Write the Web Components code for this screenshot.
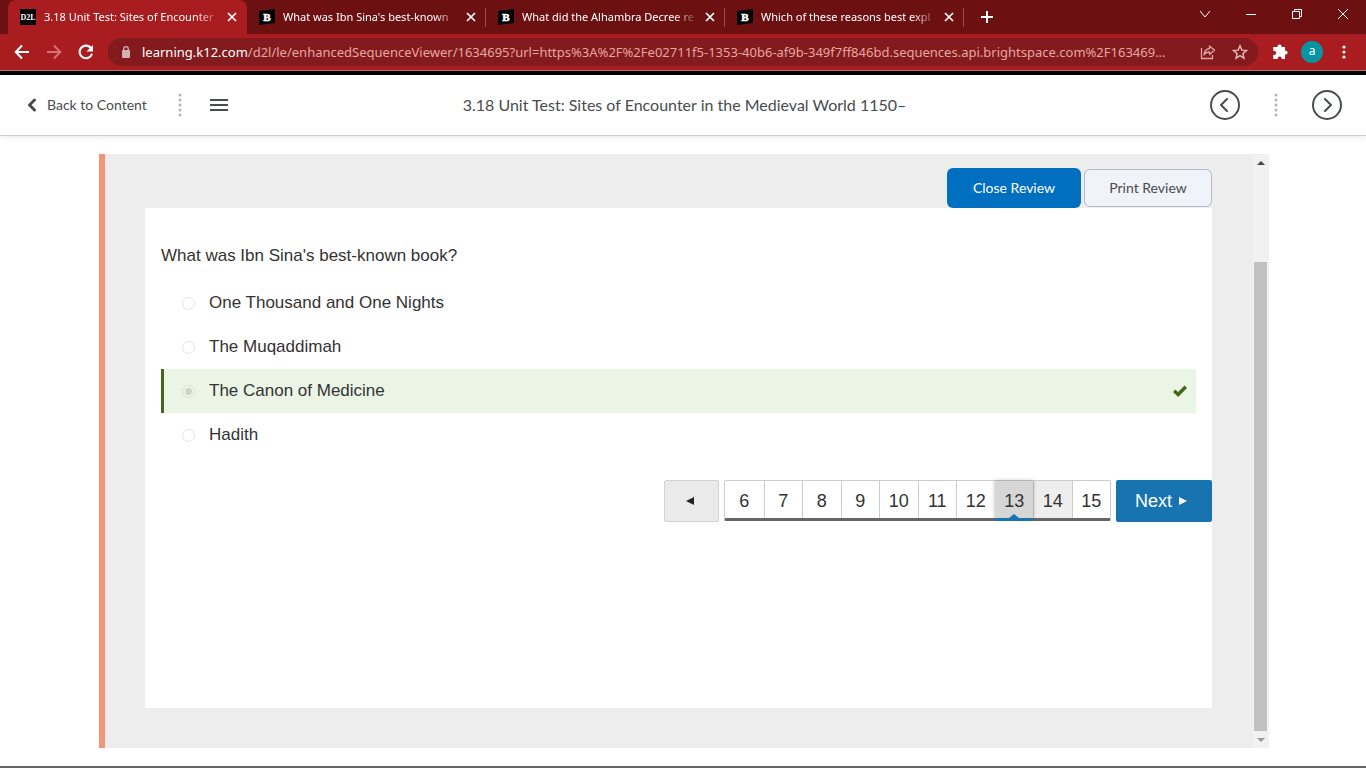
<!DOCTYPE html>
<html lang="en">
<head>
<meta charset="utf-8">
<title>3.18 Unit Test: Sites of Encounter</title>
<style>
  html, body { margin: 0; }
  body { background: #fff; font-family: "Liberation Sans", sans-serif; color: #333; }
</style>
</head>
<body>
<quiz-app></quiz-app>
<script>
const define = (name, css, html, setup) => {
  const tpl = document.createElement('template');
  tpl.innerHTML = `<style>*{box-sizing:border-box}button{font:inherit;color:inherit;background:none;border:0;padding:0;margin:0}svg{display:block}${css}</style>${html}`;
  customElements.define(name, class extends HTMLElement {
    constructor() {
      super();
      this.attachShadow({ mode: 'open' }).append(tpl.content.cloneNode(true));
    }
    connectedCallback() { if (setup) setup(this, this.shadowRoot); }
  });
};

/* ---------- browser window ---------- */

define('browser-tab', `
  :host { display: flex; align-items: center; width: 239px; height: 34px; padding: 0 7px 0 12px; gap: 8px; box-sizing: border-box; color: #fff; position: relative; }
  :host([active]) { background: #a91c1f; border-radius: 8px 8px 0 0; }
  :host([divided])::after { content: ""; position: absolute; right: 0; top: 8px; width: 1px; height: 19px; background: #a5484a; }
  ::slotted(svg) { flex: none; }
  .title { flex: 1; overflow: hidden; white-space: nowrap; font-size: 11px; line-height: 18px;
    -webkit-mask-image: linear-gradient(to right, #000 88%, rgba(0,0,0,.2)); mask-image: linear-gradient(to right, #000 88%, rgba(0,0,0,.2)); }
  button { width: 16px; height: 16px; display: grid; place-items: center; }
`, `<slot name="icon"></slot><span class="title"><slot></slot></span>
  <button aria-label="Close tab"><svg width="10" height="10" viewBox="0 0 10 10" stroke="#fff" stroke-width="1.7"><path d="M1 1l8 8M9 1l-8 8"/></svg></button>`);

const brainly = `<svg slot="icon" width="16" height="16" viewBox="0 0 16 16"><path d="M0 2L16 0v14L0 16z" fill="#000"/><text x="8" y="12" text-anchor="middle" font-family="Liberation Serif, serif" font-weight="700" font-size="11" stroke="#fff" stroke-width=".6" fill="#fff">B</text></svg>`;

define('tab-strip', `
  :host { display: flex; height: 34px; background: #6c1012; padding-left: 8px; color: #fff; }
  .new { width: 46px; display: grid; place-items: center; }
  .win { margin-left: auto; display: flex; }
  .win button { width: 46px; height: 28px; display: grid; place-items: center; }
`, `
  <browser-tab active><svg slot="icon" width="16" height="16" viewBox="0 0 16 16"><path d="M0 0h16v16H0z" fill="#000"/><text x="8" y="11" text-anchor="middle" font-family="Liberation Serif, serif" font-weight="700" font-size="8" fill="#fff">D2L</text></svg>3.18 Unit Test: Sites of Encounter</browser-tab>
  <browser-tab divided>${brainly}What was Ibn Sina's best-known</browser-tab>
  <browser-tab divided>${brainly}What did the Alhambra Decree re</browser-tab>
  <browser-tab divided>${brainly}Which of these reasons best expl</browser-tab>
  <button class="new" aria-label="New tab"><svg width="12" height="12" viewBox="0 0 12 12" stroke="#fff" stroke-width="2"><path d="M6 0v12M0 6h12"/></svg></button>
  <div class="win">
    <button aria-label="Search tabs"><svg width="12" height="12" viewBox="0 0 12 12" fill="none" stroke="#fff"><path d="M1 3l5 6 5-6"/></svg></button>
    <button aria-label="Minimize"><svg width="10" height="10" viewBox="0 0 10 10" stroke="#fff"><path d="M0 5.500h10"/></svg></button>
    <button aria-label="Restore"><svg width="10" height="10" viewBox="0 0 10 10" fill="none" stroke="#fff"><path d="M.5 2.500h7v7h-7zM2.500 2.500v-2h7v7h-2"/></svg></button>
    <button aria-label="Close"><svg width="10" height="10" viewBox="0 0 10 10" stroke="#fff"><path d="M0 0l10 10M10 0L0 10"/></svg></button>
  </div>`);

define('browser-toolbar', `
  :host { display: flex; align-items: center; gap: 4px; height: 37px; padding: 0 8px; background: #a91c1f; border-bottom: 1px solid #c3716f; box-sizing: border-box; color: #fff; }
  button { width: 28px; height: 28px; display: grid; place-items: center; flex: none; }
  .omni { flex: 1; min-width: 0; height: 28px; display: flex; align-items: center; background: #831a1d; border-radius: 14px; margin: 0 4px; padding: 0 4px 0 12px; gap: 4px; }
  .url { flex: 1; min-width: 0; overflow: hidden; white-space: nowrap; font-size: 13px; line-height: 20px; color: #e6a6a4; padding-left: 6px; }
  .url b { font-weight: 400; color: #fff; }
  .omni > svg { flex: none; }
  .avatar { width: 22px; height: 22px; border-radius: 50%; background: #0795a4; font-size: 12px; line-height: 20px; text-align: center; }
`, `
  <button aria-label="Back"><svg width="16" height="16" viewBox="0 0 16 16" fill="none" stroke="#fff" stroke-width="2"><path d="M15 8H2M8 1.500L1.700 8 8 14.500"/></svg></button>
  <button aria-label="Forward"><svg width="16" height="16" viewBox="0 0 16 16" fill="none" stroke="#d6716f" stroke-width="2"><path d="M1 8h13M8 1.500L14.300 8 8 14.500"/></svg></button>
  <button aria-label="Reload"><svg width="16" height="16" viewBox="0 0 16 16"><path d="M13.300 4.600A6.300 6.300 0 1 0 14 9.700" fill="none" stroke="#fff" stroke-width="2.100"/><path d="M15 1v6.500H8.500z" fill="#fff"/></svg></button>
  <div class="omni">
    <svg width="12" height="14" viewBox="0 0 12 14"><rect x="2" y="5" width="8" height="8" rx="1" fill="#d5b0b1"/><path d="M3.700 5.500V4a2.300 2.300 0 0 1 4.600 0v1.500" fill="none" stroke="#d5b0b1" stroke-width="1.300"/></svg>
    <span class="url"><b>learning.k12.com</b>/d2l/le/enhancedSequenceViewer/1634695?url=https%3A%2F%2Fe02711f5-1353-40b6-af9b-349f7ff846bd.sequences.api.brightspace.com%2F163469...</span>
    <button aria-label="Share"><svg width="16" height="16" viewBox="0 0 16 16" fill="none" stroke="#dfa5a4" stroke-width="1.300"><path d="M1.500 4v10.500h11V11"/><path d="M9.500 2l5 4.300-5 4.200V8C7 8 5 9 4 11c.3-3.500 2-6 5.500-6.500z" stroke-linejoin="round"/></svg></button>
    <button aria-label="Bookmark"><svg width="16" height="16" viewBox="0 0 16 16" fill="none" stroke="#e3b9b9" stroke-width="1.400"><path d="M8 1.800l1.800 4.300 4.700.4-3.600 3.100 1.100 4.600L8 11.700l-4 2.500 1.100-4.600L1.500 6.500l4.700-.4z"/></svg></button>
  </div>
  <button aria-label="Extensions"><svg width="16" height="16" viewBox="0 0 16 16" fill="#fff"><path d="M2.300 3h3.400a2 2 0 1 1 3.800 0H13v3.700a2 2 0 1 1 0 3.800V15H9.600a2 2 0 1 0-3.800 0H1.300v-4.300a2 2 0 1 0 0-3.600V3z"/></svg></button>
  <button aria-label="Profile"><span class="avatar">a</span></button>
  <button aria-label="Menu"><svg width="4" height="16" viewBox="0 0 4 16" fill="#fff"><circle cx="2" cy="3" r="1.600"/><circle cx="2" cy="8" r="1.600"/><circle cx="2" cy="13" r="1.600"/></svg></button>`);

define('browser-chrome', `
  :host { display: block; font-family: "Noto Sans", "Open Sans", sans-serif; border-bottom: 4px solid #000; }
`, `<tab-strip></tab-strip><browser-toolbar></browser-toolbar>`);

/* ---------- course header ---------- */

define('dot-divider', `
  :host { display: block; flex: none; }
`, `<svg width="4" height="24" viewBox="0 0 4 24" fill="#b4b6b9"><circle cx="2" cy="2" r="1.500"/><circle cx="2" cy="7" r="1.500"/><circle cx="2" cy="12" r="1.500"/><circle cx="2" cy="17" r="1.500"/><circle cx="2" cy="22" r="1.500"/></svg>`);

define('course-header', `
  :host { display: grid; grid-template-columns: 1fr auto 1fr; align-items: center; height: 61px; padding: 0 24px 0 27px; border-bottom: 1px solid #cfcfcf; box-shadow: 0 2px 6px rgba(0,0,0,.08); box-sizing: border-box; background: #fff; font-family: Lato, sans-serif; color: #494c4e; }
  .left, .right { display: flex; align-items: center; }
  .left { gap: 28px; }
  .right { justify-content: flex-end; gap: 34px; }
  a { display: flex; align-items: center; gap: 10px; min-width: 123px; color: inherit; text-decoration: none; font-size: 14px; line-height: 20px; }
  h1 { margin: 0; font-size: 16px; font-weight: 400; line-height: 24px; white-space: nowrap; }
  .circle { width: 30px; height: 30px; border: 2px solid #494c4e; border-radius: 50%; display: grid; place-items: center; }
`, `
  <div class="left">
    <a href="#"><svg width="10" height="14" viewBox="0 0 10 14" fill="none" stroke="#494c4e" stroke-width="3" stroke-linecap="round" stroke-linejoin="round"><path d="M7.500 2L2.500 7l5 5"/></svg>Back to Content</a>
    <dot-divider></dot-divider>
    <button aria-label="Table of contents"><svg width="18" height="14" viewBox="0 0 18 14" stroke="#494c4e" stroke-width="2"><path d="M0 2h18M0 7h18M0 12h18"/></svg></button>
  </div>
  <h1>3.18 Unit Test: Sites of Encounter in the Medieval World 1150–</h1>
  <div class="right">
    <button class="circle" aria-label="Previous"><svg width="14" height="14" viewBox="0 0 14 14" fill="none" stroke="#494c4e" stroke-width="2" stroke-linecap="round" stroke-linejoin="round"><path d="M9 1L3 7l6 6"/></svg></button>
    <dot-divider></dot-divider>
    <button class="circle" aria-label="Next"><svg width="14" height="14" viewBox="0 0 14 14" fill="none" stroke="#494c4e" stroke-width="2" stroke-linecap="round" stroke-linejoin="round"><path d="M5 1l6 6-6 6"/></svg></button>
  </div>`);

/* ---------- quiz review ---------- */

define('review-button', `
  :host { display: block; font-family: Lato, sans-serif; }
  button { width: 128px; height: 38px; border: 1px solid #b4b9c6; border-radius: 6px; background: #f0f3f9; color: #494c4e; font-size: 14px; line-height: 20px; }
  :host([primary]) button { width: 134px; height: 40px; border: 0; background: #006fbf; color: #fff; }
`, `<button><slot></slot></button>`);

define('answer-option', `
  :host { display: block; }
  label { display: flex; align-items: center; height: 44px; padding: 0 9px 0 18px; border-left: 3px solid transparent; gap: 14px; font-size: 17px; line-height: 20px; color: #333; }
  :host([correct]) label { background: #eaf5e6; border-color: #46661b; }
  input { appearance: none; margin: 0; width: 13px; height: 13px; border: 1px solid #e3e3e3; border-radius: 50%; flex: none; }
  :host([correct]) input { border-color: #d9e3d5; background: radial-gradient(circle, #cbd6c7 3px, transparent 4px); }
  span { flex: 1; }
  svg { display: none; }
  :host([correct]) svg { display: block; }
`, `<label><input type="radio" disabled><span><slot></slot></span><svg width="14" height="12" viewBox="0 0 14 12" fill="none" stroke="#46661b" stroke-width="3.400"><path d="M1.200 5.800l3.900 3.700L12.800 1.700"/></svg></label>`,
(el, root) => { root.querySelector('input').checked = el.hasAttribute('correct'); });

define('page-nav', `
  :host { display: flex; justify-content: flex-end; gap: 5px; font-size: 18px; line-height: 20px; color: #333; }
  button { display: flex; align-items: center; justify-content: center; height: 42px; }
  .prev { width: 55px; padding-right: 4px; background: #eaeaea; border: 1px solid #d3d3d3; border-radius: 2px; }
  .next { width: 96px; padding-right: 6px; background: #1874b0; color: #fff; border-radius: 2px; gap: 7px; }
  ol { list-style: none; margin: 0; padding: 0; width: 387px; height: 41px; display: grid; grid-auto-flow: column; grid-auto-columns: 1fr; border: 1px solid #ccc; border-bottom: 3px solid #666; border-radius: 2px; }
  li + li { border-left: 1px solid #ccc; }
  li button { width: 100%; height: 37px; padding-top: 3px; }
  li.seen { background: #eee; }
  li.now { background: #d6d6d6; border-color: #d6d6d6; position: relative; box-shadow: 0 0 4px rgba(0,0,0,.3); }
  li.now::after { content: ""; position: absolute; left: -1px; right: 0; bottom: -3px; height: 3px; background: #1874b0; }
  li.now::before { content: ""; position: absolute; left: 50%; margin-left: -5px; bottom: 0; border: 5px solid transparent; border-top: 0; border-bottom: 4px solid #1874b0; }
`, `
  <button class="prev" aria-label="Previous"><svg width="8" height="8" viewBox="0 0 8 8"><path d="M8 0v8L0 4z" fill="#222"/></svg></button>
  <ol></ol>
  <button class="next">Next<svg width="8" height="8" viewBox="0 0 8 8"><path d="M0 0v8l8-4z" fill="#fff"/></svg></button>`,
(el, root) => {
  const list = root.querySelector('ol');
  for (let n = 6; n <= 15; n++) {
    const li = document.createElement('li');
    if (n === 13) li.className = 'now';
    if (n === 14) li.className = 'seen';
    const b = document.createElement('button');
    b.textContent = n;
    li.append(b);
    list.append(li);
  }
});

define('scroll-rail', `
  :host { display: flex; flex-direction: column; width: 16px; background: #f1f1f1; flex: none; padding: 0 2px 0 1px; box-sizing: border-box; }
  button { height: 17px; flex: none; display: grid; place-items: center; }
  .gap { flex: 91; }
  .thumb { flex: 469; background: #c1c1c1; }
`, `<button aria-label="Scroll up"><svg width="8" height="4" viewBox="0 0 8 4"><path d="M0 4h8L4 0z" fill="#444"/></svg></button>
  <div class="gap"></div><div class="thumb"></div>
  <button aria-label="Scroll down"><svg width="8" height="4" viewBox="0 0 8 4"><path d="M0 0h8L4 4z" fill="#999"/></svg></button>`);

define('quiz-panel', `
  :host { display: flex; border-left: 6px solid #f39578; background: #ededed; }
  .body { flex: 1; display: flex; flex-direction: column; padding: 14px 41px 40px 40px; }
  .actions { display: flex; justify-content: flex-end; align-items: center; gap: 3px; }
  .card { flex: 1; background: #fff; padding: 36px 0; }
  fieldset { border: 0; margin: 0; padding: 0 16px 23px 16px; min-width: 0; }
  legend { padding: 0; margin-bottom: 13px; font-size: 17px; line-height: 24px; color: #333; }
`, `
  <div class="body">
    <div class="actions"><review-button primary>Close Review</review-button><review-button>Print Review</review-button></div>
    <div class="card">
      <fieldset>
        <legend>What was Ibn Sina's best-known book?</legend>
        <answer-option>One Thousand and One Nights</answer-option>
        <answer-option>The Muqaddimah</answer-option>
        <answer-option correct>The Canon of Medicine</answer-option>
        <answer-option>Hadith</answer-option>
      </fieldset>
      <page-nav></page-nav>
    </div>
  </div>
  <scroll-rail></scroll-rail>`);

define('quiz-app', `
  :host { display: flex; flex-direction: column; min-height: 100vh; box-sizing: border-box; border-bottom: 2px solid #666; }
  main { flex: 1; display: flex; padding: 18px 97px 18px 99px; }
  quiz-panel { flex: 1; }
`, `<browser-chrome></browser-chrome><course-header></course-header><main><quiz-panel></quiz-panel></main>`);
</script>
</body>
</html>
